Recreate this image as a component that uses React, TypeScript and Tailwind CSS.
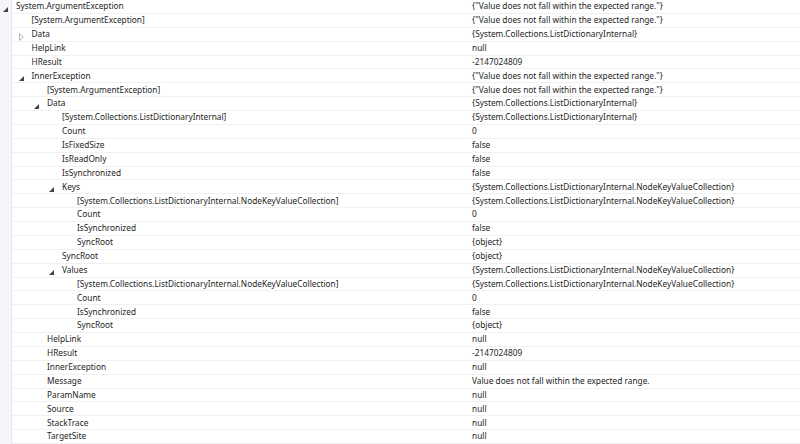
type Row = {
  name: string;
  value: string;
  level: number;
  arrow?: "open" | "closed";
};

const MSG = '{"Value does not fall within the expected range."}';
const LDI = "{System.Collections.ListDictionaryInternal}";
const NKV = "{System.Collections.ListDictionaryInternal.NodeKeyValueCollection}";

const rows: Row[] = [
  { name: "System.ArgumentException", value: MSG, level: 0, arrow: "open" },
  { name: "[System.ArgumentException]", value: MSG, level: 1 },
  { name: "Data", value: LDI, level: 1, arrow: "closed" },
  { name: "HelpLink", value: "null", level: 1 },
  { name: "HResult", value: "-2147024809", level: 1 },
  { name: "InnerException", value: MSG, level: 1, arrow: "open" },
  { name: "[System.ArgumentException]", value: MSG, level: 2 },
  { name: "Data", value: LDI, level: 2, arrow: "open" },
  { name: "[System.Collections.ListDictionaryInternal]", value: LDI, level: 3 },
  { name: "Count", value: "0", level: 3 },
  { name: "IsFixedSize", value: "false", level: 3 },
  { name: "IsReadOnly", value: "false", level: 3 },
  { name: "IsSynchronized", value: "false", level: 3 },
  { name: "Keys", value: NKV, level: 3, arrow: "open" },
  { name: "[System.Collections.ListDictionaryInternal.NodeKeyValueCollection]", value: NKV, level: 4 },
  { name: "Count", value: "0", level: 4 },
  { name: "IsSynchronized", value: "false", level: 4 },
  { name: "SyncRoot", value: "{object}", level: 4 },
  { name: "SyncRoot", value: "{object}", level: 3 },
  { name: "Values", value: NKV, level: 3, arrow: "open" },
  { name: "[System.Collections.ListDictionaryInternal.NodeKeyValueCollection]", value: NKV, level: 4 },
  { name: "Count", value: "0", level: 4 },
  { name: "IsSynchronized", value: "false", level: 4 },
  { name: "SyncRoot", value: "{object}", level: 4 },
  { name: "HelpLink", value: "null", level: 2 },
  { name: "HResult", value: "-2147024809", level: 2 },
  { name: "InnerException", value: "null", level: 2 },
  { name: "Message", value: "Value does not fall within the expected range.", level: 2 },
  { name: "ParamName", value: "null", level: 2 },
  { name: "Source", value: "null", level: 2 },
  { name: "StackTrace", value: "null", level: 2 },
  { name: "TargetSite", value: "null", level: 2 },
];

// text starts at x = 16, 31.5, 47, 62, 77 (minus the 12px gutter)
const indents = ["pl-[4px]", "pl-[19.5px]", "pl-[35px]", "pl-[50px]", "pl-[65px]"];

function Arrow({ kind }: { kind: "open" | "closed" }) {
  if (kind === "open") {
    return (
      <svg className="absolute left-[-13px] top-[4.5px]" width="5" height="5" viewBox="0 0 5 5">
        <path d="M5 0 L5 5 L0 5 Z" fill="#444" />
      </svg>
    );
  }
  return (
    <svg className="absolute left-[-13px] top-[3px]" width="5" height="8" viewBox="0 0 5 8">
      <path d="M0.5 0.5 L4.3 4 L0.5 7.5 Z" fill="none" stroke="#b4b4b4" strokeWidth="1" />
    </svg>
  );
}

export default function App() {
  return (
    <div className="flex h-[444px] w-[800px] overflow-hidden bg-white font-['Noto_Sans','Open_Sans',sans-serif] text-[8.3px] text-[#1e1e1e]">
      <div className="w-[12px] shrink-0 border-r border-[#e6eaf0] bg-[#f4f6f9]" />
      <div className="flex flex-1 flex-col">
        {rows.map((r, i) => (
          <div
            key={i}
            className="flex h-[13.875px] shrink-0 items-center border-b border-[#f1f1f1] leading-none"
          >
            <div className={`flex w-[460px] shrink-0 items-center ${indents[r.level]}`}>
              <span className="relative whitespace-nowrap">
                {r.arrow && <Arrow kind={r.arrow} />}
                {r.name}
              </span>
            </div>
            <span className="whitespace-nowrap">{r.value}</span>
          </div>
        ))}
      </div>
    </div>
  );
}
